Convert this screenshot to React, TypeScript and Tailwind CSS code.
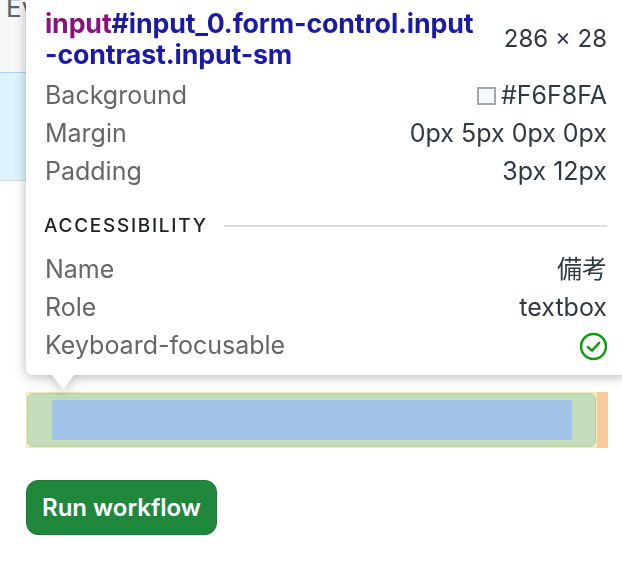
import React from "react";

const font = { fontFamily: "Inter, 'Noto Sans CJK JP', sans-serif" };

function Row({ label, children }: { label: string; children: React.ReactNode }) {
  return (
    <div className="flex h-[38px] items-center justify-between">
      <span className="text-[25px] text-[#666666]">{label}</span>
      <span className="flex items-center text-[25px] text-[#303942]">{children}</span>
    </div>
  );
}

export default function App() {
  return (
    <div className="relative h-[566px] w-[622px] overflow-hidden bg-white" style={font}>
      {/* underlying page */}
      <div className="flex flex-col">
        <div className="h-[72px] w-[26px] overflow-hidden bg-[#f6f8fa] pl-[6px]">
          <div className="-mt-[5px] whitespace-nowrap text-[26px] leading-[26px] text-[#59636e]">Ev</div>
        </div>
        <div className="h-[109px] w-[26px] border-t border-b border-t-[#a6d2f3] border-b-[#d0d7de] bg-[#ddf4ff]"></div>
        <div className="h-[211px]"></div>
        <div className="flex pl-[26px]">
          <div className="h-[56px] w-[571px] border border-[#f7e6a8] bg-[#fbf1cc]">
            <div className="flex h-full w-full rounded-[6px] border border-[#b6d3ab] bg-[#c3dcb9] py-[6px] pl-[24px] pr-[23px]">
              <div className="h-full w-full bg-[#9fc2e6]"></div>
            </div>
          </div>
          <div className="h-[56px] w-[11px] bg-[#f8cb9b]"></div>
        </div>
        <div className="h-[32px]"></div>
        <div className="pl-[26px]">
          <button className="flex h-[55px] w-[191px] items-center justify-center rounded-[12px] border border-[#1c7a37] bg-[#1f883d] text-[24px] font-semibold text-white">
            Run workflow
          </button>
        </div>
      </div>

      {/* tooltip */}
      <div className="absolute left-[26px] top-0 w-[600px] drop-shadow-[0_2px_6px_rgba(0,0,0,0.28)]">
        <div className="rounded-b-[6px] bg-white pb-[10px] pl-[19px] pr-[19px] pt-[8px]">
          <div className="flex items-center justify-between">
            <div className="text-[26.75px] font-bold leading-[31px] tracking-[-0.005em] text-[#1a1aa6]">
              <div>
                <span className="text-[#881280]">input</span>#input_0.form-control.input
              </div>
              <div>-contrast.input-sm</div>
            </div>
            <div className="text-[24px] leading-[30px] text-[#303942]">286 × 28</div>
          </div>
          <div className="mt-[7px]">
            <Row label="Background">
              <span className="mr-[5px] inline-block h-[18px] w-[19px] border-2 border-[#a8a8a8] bg-[#f6f8fa]"></span>
              #F6F8FA
            </Row>
            <Row label="Margin">0px 5px 0px 0px</Row>
            <Row label="Padding">3px 12px</Row>
          </div>
          <div className="mt-[16px] flex h-[38px] items-center gap-[16px]">
            <span className="-ml-[1px] text-[19px] font-medium tracking-[0.09em] text-[#202124]">ACCESSIBILITY</span>
            <div className="h-[2px] flex-1 bg-[#dddddd]"></div>
          </div>
          <div className="mt-[6px]">
            <Row label="Name">備考</Row>
            <Row label="Role">textbox</Row>
            <Row label="Keyboard-focusable">
              <svg width="29" height="29" viewBox="0 0 28 28" className="-mr-[1px]">
                <circle cx="14" cy="14" r="12" fill="none" stroke="#0f9d0f" strokeWidth="2.4" />
                <path d="M8.5 14.5 L12.5 18 L19.5 10.5" fill="none" stroke="#0f9d0f" strokeWidth="2.4" strokeLinecap="round" strokeLinejoin="round" />
              </svg>
            </Row>
          </div>
        </div>
        <div className="ml-[26px] h-0 w-0 border-l-[11px] border-r-[11px] border-t-[15px] border-l-transparent border-r-transparent border-t-white"></div>
      </div>
    </div>
  );
}
